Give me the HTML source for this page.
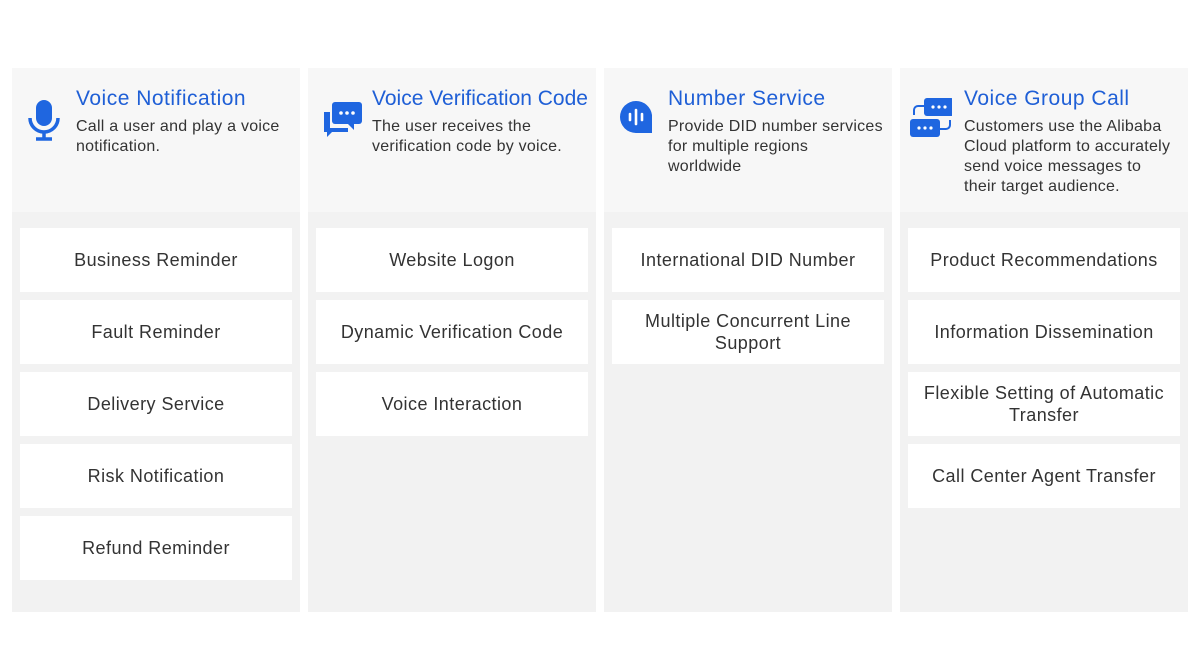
<!DOCTYPE html>
<html><head><style>
body{margin:0;width:1200px;height:660px;background:#fff;font-family:"Liberation Sans",sans-serif;position:relative;overflow:hidden}
.col{position:absolute;top:68px;width:288px;height:544px;background:#f2f2f2}
.hd{height:144px;background:#f7f7f7;position:relative}
.ic{position:absolute;left:14px;top:28px;width:36px;height:48px}
.t{position:absolute;left:64px;top:19px;font-size:21px;color:#1f5fd6;letter-spacing:.5px;white-space:nowrap}
.d{position:absolute;left:64px;top:49px;font-size:16px;line-height:20px;color:#333;letter-spacing:.25px;white-space:nowrap}
.it{margin:16px 8px 0;height:64px;background:#fff;display:flex;align-items:center;justify-content:center;text-align:center;font-size:18px;line-height:22px;color:#333;letter-spacing:.45px;padding:0 10px;box-sizing:border-box}
.it+.it{margin-top:8px}
</style></head><body>
<div class="col" style="left:12px"><div class="hd">
<svg class="ic" viewBox="0 0 36 48"><rect x="10" y="4" width="16" height="26" rx="8" fill="#1f66e0"/><path d="M4 22a14 14 0 0 0 28 0" fill="none" stroke="#1f66e0" stroke-width="3.5"/><path d="M18 36v6M10 43h16" stroke="#1f66e0" stroke-width="3.5"/></svg>
<div class="t">Voice Notification</div><div class="d">Call a user and play a voice<br>notification.</div></div>
<div class="it">Business Reminder</div><div class="it">Fault Reminder</div><div class="it">Delivery Service</div><div class="it">Risk Notification</div><div class="it">Refund Reminder</div></div>
<div class="col" style="left:308px"><div class="hd">
<svg class="ic" viewBox="0 0 44 48" style="width:44px;left:12px"><path d="M4 16h6v16h18v4H12l-5 5v-5H4z" fill="#1f66e0"/><rect x="12" y="6" width="30" height="22" rx="3" fill="#1f66e0"/><path d="M28 28l6 6v-6z" fill="#1f66e0"/><circle cx="21" cy="17" r="1.8" fill="#fff"/><circle cx="27" cy="17" r="1.8" fill="#fff"/><circle cx="33" cy="17" r="1.8" fill="#fff"/></svg>
<div class="t" style="letter-spacing:0">Voice Verification Code</div><div class="d">The user receives the<br>verification code by voice.</div></div>
<div class="it">Website Logon</div><div class="it">Dynamic Verification Code</div><div class="it">Voice Interaction</div></div>
<div class="col" style="left:604px"><div class="hd">
<svg class="ic" viewBox="0 0 36 48"><path d="M18 4a16 16 0 1 0 0 32h16V18A16 16 0 0 0 18 4z" transform="translate(0 1)" fill="#1f66e0"/><path d="M12 18v6M18 14v14M24 18v6" stroke="#fff" stroke-width="2.6" stroke-linecap="round"/></svg>
<div class="t">Number Service</div><div class="d">Provide DID number services<br>for multiple regions<br>worldwide</div></div>
<div class="it">International DID Number</div><div class="it">Multiple Concurrent Line<br>Support</div></div>
<div class="col" style="left:900px"><div class="hd">
<svg class="ic" viewBox="0 0 44 48" style="width:44px;left:8px"><rect x="16" y="2" width="30" height="18" rx="3" fill="#1f66e0"/><rect x="2" y="23" width="30" height="18" rx="3" fill="#1f66e0"/><path d="M16 10h-6a4 4 0 0 0-4 4v5M32 33h6a4 4 0 0 0 4-4v-5" fill="none" stroke="#1f66e0" stroke-width="2"/><g fill="#fff"><circle cx="25" cy="11" r="1.6"/><circle cx="31" cy="11" r="1.6"/><circle cx="37" cy="11" r="1.6"/><circle cx="11" cy="32" r="1.6"/><circle cx="17" cy="32" r="1.6"/><circle cx="23" cy="32" r="1.6"/></g></svg>
<div class="t">Voice Group Call</div><div class="d">Customers use the Alibaba<br>Cloud platform to accurately<br>send voice messages to<br>their target audience.</div></div>
<div class="it">Product Recommendations</div><div class="it">Information Dissemination</div><div class="it">Flexible Setting of Automatic<br>Transfer</div><div class="it">Call Center Agent Transfer</div></div>
</body></html>
